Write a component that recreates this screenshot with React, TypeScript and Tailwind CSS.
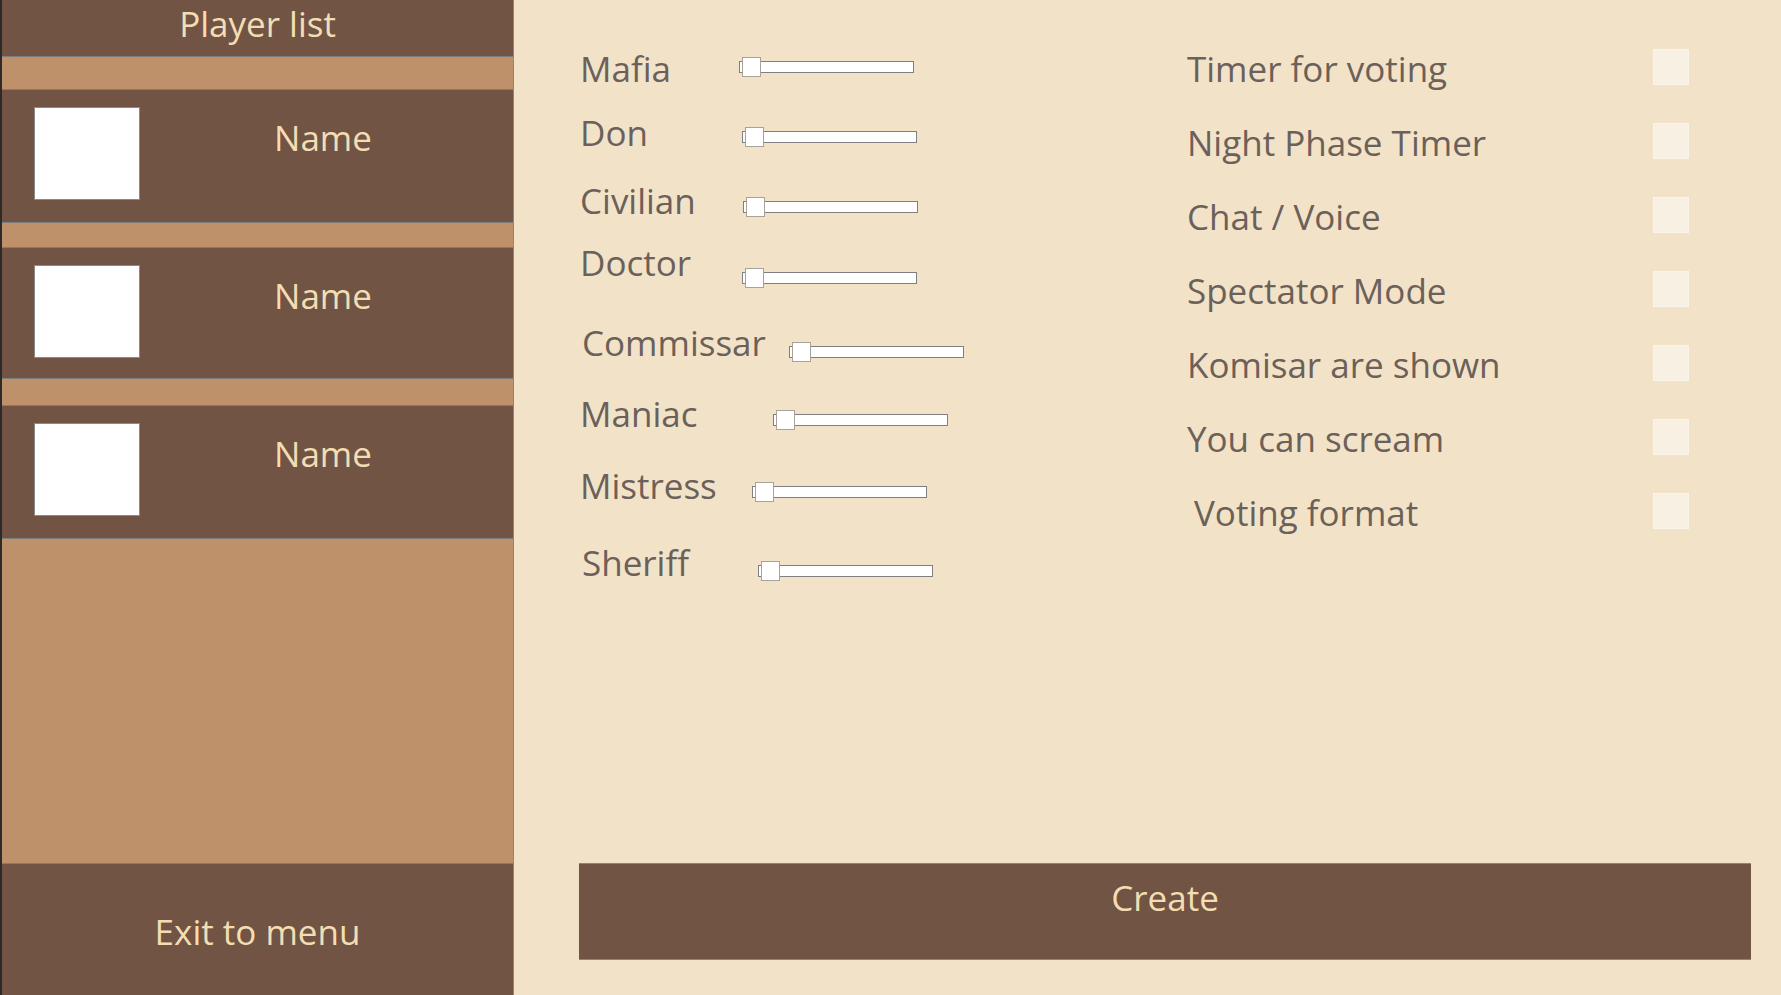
const font = { fontFamily: '"Open Sans", "Noto Sans", sans-serif' };

function Slider() {
  return (
    <div className="relative h-[20px] w-[175px]">
      <div className="absolute inset-x-0 top-[4px] h-[12px] border border-[#7f7f7f] bg-white" />
      <div className="absolute left-[3px] top-0 h-[20px] w-[19px] border border-[#a9a29b] bg-white" />
    </div>
  );
}

function PlayerRow({ className }: { className: string }) {
  return (
    <div className={`flex items-start border-y border-[#7d7d7d] bg-[#725444] ${className}`}>
      <div className="ml-[32px] mt-[17px] h-[93px] w-[106px] border border-[#8a8a8a] bg-white" />
      <div className="mt-[26px] flex-1 pr-[7px] text-center text-[35px] leading-[44px] text-[#f3deb4]">
        Name
      </div>
    </div>
  );
}

function Toggle({ label, offset = '' }: { label: string; offset?: string }) {
  return (
    <div className="flex h-[36px] items-center">
      <span className={`mt-[3px] text-[35px] leading-[44px] text-[#6b605a] ${offset}`}>{label}</span>
      <div className="ml-auto h-[36px] w-[36px] border border-[#faf4ea] bg-[#f8f0e2]" />
    </div>
  );
}

export default function App() {
  return (
    <div className="flex h-[995px] w-[1781px] overflow-hidden bg-[#f2e3c8]" style={font}>
      {/* Player list */}
      <aside className="flex w-[514px] flex-none flex-col border-l-2 border-r border-l-[#2e2a28] border-r-[#8a8580] bg-[#bf916a]">
        <div className="h-[57px] border-b border-[#7d7d7d] bg-[#725444] text-center text-[35px] leading-[48px] text-[#f3deb4]">
          Player list
        </div>
        <PlayerRow className="mt-[32px] h-[134px]" />
        <PlayerRow className="mt-[24px] h-[132px]" />
        <PlayerRow className="mt-[26px] h-[134px]" />
        <div className="flex-1" />
        <div className="flex h-[132px] items-center justify-center border-t border-[#7d7d7d] bg-[#725444] pt-[4px] text-[35px] leading-[44px] text-[#f3deb4]">
          Exit to menu
        </div>
      </aside>

      {/* Lobby settings */}
      <main className="flex flex-1 flex-col pb-[35px] pl-[65px] pr-[30px]">
        <div className="flex text-[35px] leading-[44px] text-[#6b605a]">
          <div className="w-[608px] flex-none pl-[1px]">
            <div className="mt-[47px] flex h-[44px] items-start">
              <span className="w-[159px]">Mafia</span>
              <div className="mt-[10px]"><Slider /></div>
            </div>
            <div className="mt-[20px] flex h-[44px] items-start">
              <span className="w-[162px]">Don</span>
              <div className="mt-[16px]"><Slider /></div>
            </div>
            <div className="mt-[24px] flex h-[44px] items-start">
              <span className="w-[163px]">Civilian</span>
              <div className="mt-[18px]"><Slider /></div>
            </div>
            <div className="mt-[18px] flex h-[44px] items-start">
              <span className="w-[162px]">Doctor</span>
              <div className="mt-[27px]"><Slider /></div>
            </div>
            <div className="mt-[36px] flex h-[44px] items-start">
              <span className="w-[209px] pl-[2px]">Commissar</span>
              <div className="mt-[21px]"><Slider /></div>
            </div>
            <div className="mt-[27px] flex h-[44px] items-start">
              <span className="w-[193px]">Maniac</span>
              <div className="mt-[18px]"><Slider /></div>
            </div>
            <div className="mt-[28px] flex h-[44px] items-start">
              <span className="w-[172px]">Mistress</span>
              <div className="mt-[18px]"><Slider /></div>
            </div>
            <div className="mt-[33px] flex h-[44px] items-start">
              <span className="w-[178px] pl-[2px]">Sheriff</span>
              <div className="mt-[20px]"><Slider /></div>
            </div>
          </div>

          <div className="flex flex-1 flex-col gap-[38px] pr-[62px] pt-[49px]">
            <Toggle label="Timer for voting" />
            <Toggle label="Night Phase Timer" />
            <Toggle label="Chat / Voice" />
            <Toggle label="Spectator Mode" />
            <Toggle label="Komisar are shown" />
            <Toggle label="You can scream" />
            <Toggle label="Voting format" offset="ml-[7px]" />
          </div>
        </div>

        <button className="mt-auto flex h-[97px] w-full items-start justify-center border-y border-[#8a8580] bg-[#725444] pt-[12px] text-[35px] leading-[44px] text-[#f3deb4]">
          Create
        </button>
      </main>
    </div>
  );
}
